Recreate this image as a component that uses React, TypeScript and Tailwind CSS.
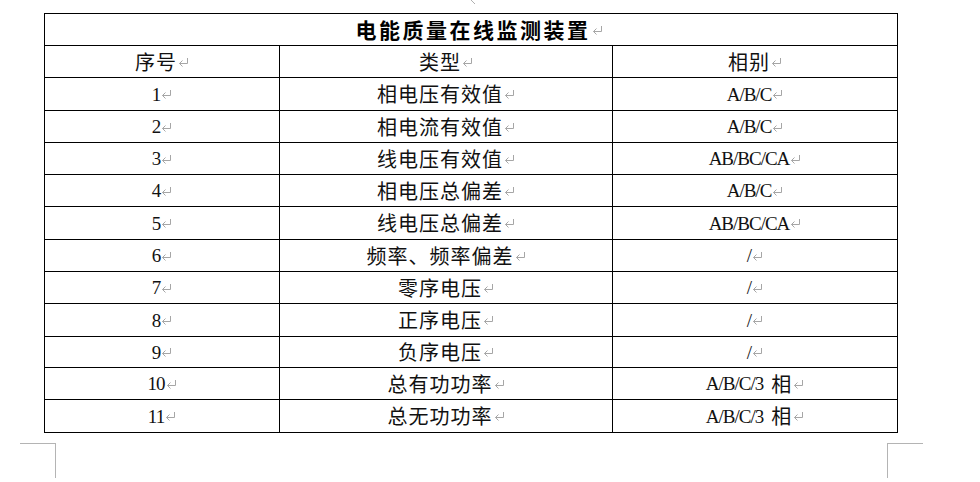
import React from "react"

const rows: [string, string, string, number][] = [
  ["1", "相电压有效值", "A/B/C", 33],
  ["2", "相电流有效值", "A/B/C", 32],
  ["3", "线电压有效值", "AB/BC/CA", 32],
  ["4", "相电压总偏差", "A/B/C", 32],
  ["5", "线电压总偏差", "AB/BC/CA", 33],
  ["6", "频率、频率偏差", "/", 32],
  ["7", "零序电压", "/", 32],
  ["8", "正序电压", "/", 33],
  ["9", "负序电压", "/", 31],
  ["10", "总有功功率", "A/B/C/3 相", 32],
  ["11", "总无功功率", "A/B/C/3 相", 33],
]

function Mark() {
  return (
    <svg width="11" height="10" viewBox="0 0 11 10" className="ml-[1px] inline-block align-[1px]">
      <path d="M9.5 1V6.5H1.5M1.5 6.5L4.5 3.5M1.5 6.5L4.5 9.5" fill="none" stroke="#a6a6a6" strokeWidth="1" />
    </svg>
  )
}

function Txt({ s }: { s: string }) {
  const parts = s.split(/([\x00-\x7f]+)/).filter(Boolean)
  return (
    <span className="inline-flex items-center">
      {parts.map((p, i) =>
        /^[\x00-\x7f]+$/.test(p) ? (
          <span key={i} className="inline-flex items-center font-['Liberation_Serif',serif] text-[19px] tracking-[-1px] text-[#111]">
            {p.trimEnd()}
            {p.endsWith(" ") && <span className="inline-block w-[8px]" />}
          </span>
        ) : (
          <span key={i} className="font-['Noto_Sans_CJK_SC',sans-serif] text-[20px] tracking-[1px] text-[#111]">
            {p}
          </span>
        ),
      )}
      <Mark />
    </span>
  )
}

export default function App() {
  return (
    <div className="relative h-[482px] w-[980px] overflow-hidden bg-white pt-[13px] text-black">
      <svg width="8" height="6" className="absolute left-[469px] top-0">
        <path d="M2 0L6 4" stroke="#b0b0b0" strokeWidth="1" fill="none" />
      </svg>
      <table className="ml-[44px] w-[853px] table-fixed border-collapse">
        <colgroup>
          <col className="w-[235px]" />
          <col className="w-[333px]" />
          <col className="w-[285px]" />
        </colgroup>
        <tbody>
          <tr className="h-[32px]">
            <td colSpan={3} className="border border-black p-0 text-center leading-none">
              <span className="inline-flex items-center pl-[16px]">
                <span className="font-['Noto_Sans_CJK_SC',sans-serif] text-[21px] font-bold tracking-[2.5px]">
                  电能质量在线监测装置
                </span>
                <Mark />
              </span>
            </td>
          </tr>
          <tr className="h-[32px]">
            {["序号", "类型", "相别"].map((h) => (
              <td key={h} className="border border-black p-0 text-center leading-none">
                <Txt s={h} />
              </td>
            ))}
          </tr>
          {rows.map(([n, t, p, h]) => (
            <tr key={n} style={{ height: h }}>
              <td className="border border-black p-0 text-center leading-none">
                <Txt s={n} />
              </td>
              <td className="border border-black p-0 text-center leading-none">
                <Txt s={t} />
              </td>
              <td className="border border-black p-0 text-center leading-none">
                <Txt s={p} />
              </td>
            </tr>
          ))}
        </tbody>
      </table>
      <div className="mt-[10px] ml-[20px] flex w-[903px] justify-between">
        <div className="h-[35px] w-[36px] border-t border-r border-[#b4b4b4]" />
        <div className="h-[35px] w-[36px] border-t border-l border-[#b4b4b4]" />
      </div>
    </div>
  )
}
